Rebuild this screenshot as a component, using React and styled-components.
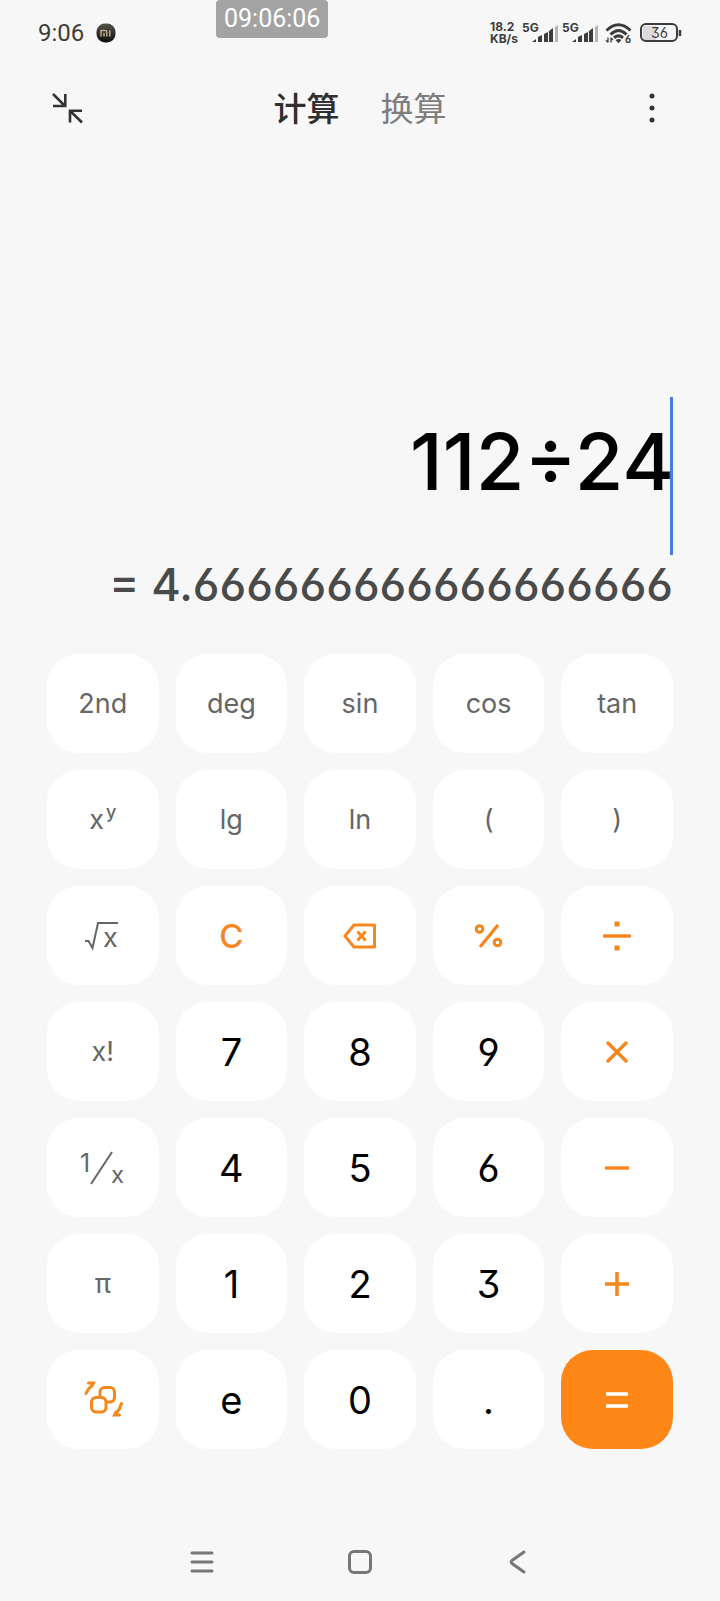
import React from "react"
import styled, { createGlobalStyle } from "styled-components"

const GlobalStyle = createGlobalStyle`
  * {
    box-sizing: border-box;
  }
  body {
    margin: 0;
    background: #f7f7f7;
    color: #333;
    font-family: Inter, "Noto Sans CJK SC", sans-serif;
    /* open six, open nine and flat-top three */
    font-feature-settings: "cv03", "cv04", "cv09";
  }
  button, input {
    padding: 0;
    border: 0;
    background: none;
    color: inherit;
    font: inherit;
    font-feature-settings: inherit;
  }
  button {
    cursor: pointer;
  }
  svg {
    display: block;
    flex: none;
    overflow: visible;
  }
`

const Page = styled.div`
  position: relative;
  display: flex;
  flex-direction: column;
  min-height: 100vh;
`

const Stamp = styled.time`
  position: absolute;
  top: 0;
  left: 30%;
  padding: 0 8px;
  border-radius: 4px;
  background: #a3a3a3;
  color: #fff;
  font-family: Roboto, sans-serif;
  font-size: 25px;
  line-height: 38px;
`

const StatusBar = styled.div`
  display: flex;
  align-items: center;
  justify-content: space-between;
  height: 66px;
  padding: 0 38px;
  color: #3c3c3c;
`

const StatusGroup = styled.div`
  display: flex;
  align-items: center;
  gap: ${p => p.$gap}px;
`

const Clock = styled.span`
  font-family: Roboto, sans-serif;
  font-size: 24px;
`

const Speed = styled.span`
  font-size: 12px;
  font-weight: 700;
  line-height: 12px;
`

const Header = styled.header`
  display: grid;
  grid-template-columns: 1fr auto 1fr;
  align-items: center;
  height: 84px;
  padding: 0 48px;
`

const IconButton = styled.button`
  display: flex;
  justify-self: ${p => p.$side};
`

const Tabs = styled.nav`
  display: flex;
  gap: 41px;
`

const Tab = styled.button`
  padding-bottom: 2px;
  color: ${p => (p.$active ? "#2f2f2f" : "#7d7d7d")};
  font-family: "Noto Sans CJK SC", sans-serif;
  font-size: 33px;
  font-weight: ${p => (p.$active ? 500 : 400)};
  line-height: 48px;
`

const Display = styled.section`
  display: flex;
  flex-direction: column;
  padding: 247px 47px 39px;
`

const InputRow = styled.div`
  display: flex;
  height: 158px;
`

const Expression = styled.input`
  flex: 1;
  min-width: 0;
  margin-right: -4px;
  padding-bottom: 30px;
  outline: none;
  color: #000;
  font-size: 79px;
  font-weight: 500;
  text-align: right;
`

const Caret = styled.span`
  width: 3px;
  background: #4280e0;
`

const Result = styled.output`
  color: #4a4a4a;
  font-size: 45px;
  font-weight: 500;
  line-height: 60px;
  text-align: right;
  white-space: nowrap;
`

const Keypad = styled.main`
  display: grid;
  grid-template-columns: repeat(5, 1fr);
  grid-auto-rows: 99px;
  gap: 17px;
  padding: 0 47px;
`

const Key = styled.button`
  display: flex;
  align-items: center;
  justify-content: center;
  border-radius: 32px;
  background: #fff;
  color: #666;
  font-size: 27px;
`

const DigitKey = styled(Key)`
  color: #000;
  font-size: 38px;
`

const ActionKey = styled(Key)`
  color: #f5871f;
  font-size: 33px;
  font-weight: 500;
`

const EqualsKey = styled(Key)`
  background: #ff8717;
  color: #fff;
`

const Power = styled.sup`
  align-self: flex-start;
  margin: 32px 0 0 2px;
  font-size: 18px;
  font-weight: 500;
  line-height: 20px;
`

const NavBar = styled.nav`
  display: flex;
  align-items: center;
  justify-content: space-around;
  width: 66%;
  height: 78px;
  margin: auto auto 0;
  color: #777;
`

const Glyph = ({ w, h, stroke = 3, children }) => (
  <svg
    width={w}
    height={h}
    viewBox={`0 0 ${w} ${h}`}
    fill="none"
    stroke="currentColor"
    strokeWidth={stroke}
    aria-hidden="true"
  >
    {children}
  </svg>
)

const SvgText = styled.text`
  fill: currentColor;
  stroke: none;
  font-size: ${p => p.$size}px;
  font-weight: ${p => p.$weight || 400};
`

const AppBadge = () => (
  <svg width="20" height="20" viewBox="0 0 20 20" aria-hidden="true">
    <defs>
      <linearGradient id="badge" x1="0" y1="0" x2="0" y2="1">
        <stop offset="0" stopColor="#55534d" />
        <stop offset="0.5" stopColor="#34302a" />
        <stop offset="1" stopColor="#0c0b0a" />
      </linearGradient>
    </defs>
    <rect x="0.5" y="0.5" width="19" height="19" rx="8.5" fill="url(#badge)" />
    <path
      d="M5 13.5V7.5h4.2q1.6 0 1.6 1.6v4.4M8 9.8v3.7M13.8 7.3v6.2"
      fill="none"
      stroke="#b9a98c"
      strokeWidth="1.5"
    />
  </svg>
)

const Signal = () => (
  <Glyph w={36} h={26} stroke={0}>
    <SvgText x="0" y="12" $size={12} $weight={700}>5G</SvgText>
    <path d="M10 22l4-3v3zM16 17l4-2v7h-4zM22 14l4-2v10h-4zM27 11l4-3v14h-4z" fill="currentColor" />
    <path d="M33 7l3-2v17h-3z" fill="#b5b5b5" />
  </Glyph>
)

const Wifi = () => (
  <Glyph w={28} h={26} stroke={3}>
    <path d="M1.5 10.5Q13.5-1 25.5 10.500M5.5 14.5Q13.5 6.500 21.5 14.500M9 17.800Q13.500 14 18 17.800" />
    <path d="M10.500 20q3-2 6 0l-3 3.200z" fill="currentColor" stroke="none" />
    <path d="M3 17.500v5M6 17.500v5M1 20.200l2 2M6 18l2 2" strokeWidth="1.300" />
    <SvgText x="20" y="23" $size={10} $weight={700}>6</SvgText>
  </Glyph>
)

const Battery = () => (
  <Glyph w={42} h={20} stroke={2}>
    <rect x="3" y="3" width="13" height="14" fill="#dadada" stroke="none" />
    <rect x="1" y="1" width="36" height="17" rx="5" />
    <path d="M40 7v6" strokeWidth="2.500" />
    <SvgText x="11" y="15" $size={14}>36</SvgText>
  </Glyph>
)

const Collapse = () => (
  <Glyph w={38} h={32} stroke={2.6}>
    <path d="M5 2l12 12M5 14h12.300V2M34 30.500L22 18.800M22 30.500V18.800h12" />
  </Glyph>
)

const More = () => (
  <Glyph w={40} h={32} stroke={0}>
    <g fill="currentColor">
      <circle cx="20" cy="4" r="2.500" />
      <circle cx="20" cy="16" r="2.500" />
      <circle cx="20" cy="28" r="2.500" />
    </g>
  </Glyph>
)

const Root = () => (
  <Glyph w={36} h={30} stroke={2}>
    <path d="M0 20h3.500l4 7L13 2h20" />
    <SvgText x="18" y="26" $size={27}>x</SvgText>
  </Glyph>
)

const Reciprocal = () => (
  <Glyph w={46} h={36} stroke={2}>
    <path d="M11 34L32 2" />
    <SvgText x="0" y="22" $size={25}>1</SvgText>
    <SvgText x="31" y="33" $size={24}>x</SvgText>
  </Glyph>
)

const Backspace = () => (
  <Glyph w={34} h={26} stroke={3}>
    <path d="M11 2H31.500V24H11L2 13z" strokeLinejoin="round" />
    <path d="M14.500 8.500l8 9M22.500 8.500l-8 9" />
  </Glyph>
)

const Percent = () => (
  <Glyph w={30} h={26} stroke={3}>
    <path d="M24 2L6 24" strokeWidth="3.300" />
    <circle cx="5.500" cy="6" r="3.300" />
    <circle cx="23.500" cy="19.500" r="3.300" />
  </Glyph>
)

const Divide = () => (
  <Glyph w={28} h={30} stroke={3.5}>
    <path d="M1.500 15h25" strokeLinecap="round" />
    <path d="M11.500 0.500h5v5h-5zM11.500 24.500h5v5h-5z" fill="currentColor" stroke="none" />
  </Glyph>
)

const Times = () => (
  <Glyph w={24} h={24} stroke={3.5}>
    <path d="M3 3l18 18M21 3L3 21" strokeLinecap="round" />
  </Glyph>
)

const Minus = () => (
  <Glyph w={24} h={24} stroke={3.5}>
    <path d="M0 12h24" />
  </Glyph>
)

const Plus = () => (
  <Glyph w={24} h={24} stroke={3.5}>
    <path d="M0 12h24M12 0v24" />
  </Glyph>
)

const Equals = () => (
  <Glyph w={22} h={24} stroke={3.5}>
    <path d="M0 6h22M0 18h22" />
  </Glyph>
)

const SwitchLayout = () => (
  <Glyph w={42} h={40} stroke={3}>
    <rect x="18" y="7.500" width="14.500" height="14.500" rx="4.500" />
    <rect x="9.500" y="17.500" width="14.500" height="14.500" rx="4.500" fill="#fff" />
    <path d="M4 13.500Q6 8.500 10.500 5M6.500 3h5l-1.500 3M39.500 23.500Q38 29 34 33.500M37.500 35h-5l1.500-3" strokeLinecap="round" />
  </Glyph>
)

const keys = [
  { label: "2nd" },
  { label: "deg" },
  { label: "sin" },
  { label: "cos" },
  { label: "tan" },
  { name: "x to the y", label: <>x<Power>y</Power></> },
  { label: "lg" },
  { label: "ln" },
  { label: "(" },
  { label: ")" },
  { name: "square root", label: <Root /> },
  { as: ActionKey, label: "C" },
  { as: ActionKey, name: "backspace", label: <Backspace /> },
  { as: ActionKey, name: "percent", label: <Percent /> },
  { as: ActionKey, name: "divide", label: <Divide /> },
  { label: "x!" },
  { as: DigitKey, label: "7" },
  { as: DigitKey, label: "8" },
  { as: DigitKey, label: "9" },
  { as: ActionKey, name: "multiply", label: <Times /> },
  { name: "reciprocal", label: <Reciprocal /> },
  { as: DigitKey, label: "4" },
  { as: DigitKey, label: "5" },
  { as: DigitKey, label: "6" },
  { as: ActionKey, name: "subtract", label: <Minus /> },
  { label: "π" },
  { as: DigitKey, label: "1" },
  { as: DigitKey, label: "2" },
  { as: DigitKey, label: "3" },
  { as: ActionKey, name: "add", label: <Plus /> },
  { as: ActionKey, name: "switch layout", label: <SwitchLayout /> },
  { as: DigitKey, label: "e" },
  { as: DigitKey, label: "0" },
  { as: DigitKey, label: "." },
  { as: EqualsKey, name: "equals", label: <Equals /> }
]

export default function App() {
  return (
    <>
      <GlobalStyle />
      <Page>
        <Stamp>09:06:06</Stamp>
        <StatusBar>
          <StatusGroup $gap={12}>
            <Clock>9:06</Clock>
            <AppBadge />
          </StatusGroup>
          <StatusGroup $gap={7}>
            <StatusGroup $gap={4}>
              <Speed>
                18.2
                <br />
                KB/s
              </Speed>
              <Signal />
              <Signal />
            </StatusGroup>
            <Wifi />
            <Battery />
          </StatusGroup>
        </StatusBar>

        <Header>
          <IconButton $side="start" aria-label="collapse">
            <Collapse />
          </IconButton>
          <Tabs>
            <Tab $active>计算</Tab>
            <Tab>换算</Tab>
          </Tabs>
          <IconButton $side="end" aria-label="more">
            <More />
          </IconButton>
        </Header>

        <Display>
          <InputRow>
            <Expression aria-label="expression" defaultValue="112÷24" />
            <Caret />
          </InputRow>
          <Result>= 4.666666666666666666</Result>
        </Display>

        <Keypad>
          {keys.map(({ as: Part = Key, name, label }, i) => (
            <Part key={i} aria-label={name}>
              {label}
            </Part>
          ))}
        </Keypad>

        <NavBar>
          <IconButton aria-label="recent apps">
            <Glyph w={24} h={24}>
              <path d="M2 3h20M2 12h20M2 21h20" strokeLinecap="round" />
            </Glyph>
          </IconButton>
          <IconButton aria-label="home">
            <Glyph w={24} h={24}>
              <rect x="1.500" y="1.500" width="21" height="21" rx="4.500" />
            </Glyph>
          </IconButton>
          <IconButton aria-label="back">
            <Glyph w={24} h={24}>
              <path d="M18 2L6 10.500q-1.500 1.500 0 3L18 22" strokeLinecap="round" />
            </Glyph>
          </IconButton>
        </NavBar>
      </Page>
    </>
  )
}
